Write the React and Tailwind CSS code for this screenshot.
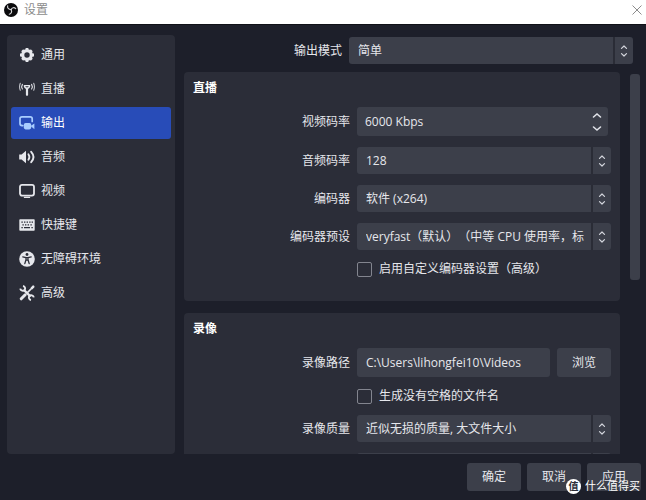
import { useState } from 'react';

function ObsLogo() {
  return (
    <svg viewBox="0 0 16 16" className="size-3.5" fill="none" strokeLinecap="round">
      <circle cx="8" cy="8" r="8" fill="#0b0b0d" />
      <g stroke="#d8d8da" strokeWidth="1.3">
        <path d="M4.2 3.2c-.6 2.4 1 4.2 3.8 4.2" />
        <path d="M8 7.6c1.2-2.4 3.6-3 5.4-1.2" />
        <path d="M8.2 7.6c1.2 2.2.2 4.6-2.2 5.2" />
      </g>
    </svg>
  );
}

function GearIcon() {
  return (
    <svg viewBox="0 0 16 16" className="size-4" fill="none" stroke="currentColor">
      <circle cx="8" cy="8" r="4.3" strokeWidth="3.2" />
      <path
        d="M8 1v2M8 13v2M1 8h2M13 8h2M3.2 3.2l1.2 1.2M11.6 11.6l1.2 1.2M3.2 12.8l1.2-1.2M11.6 4.4l1.2-1.2"
        strokeWidth="2.8"
      />
    </svg>
  );
}

function AntennaIcon() {
  return (
    <svg
      viewBox="0 0 16 16"
      className="size-4"
      fill="none"
      stroke="currentColor"
      strokeLinecap="round"
    >
      <path d="M5.4 4.6Q5.6 7 8 7.4q2.4-.4 2.6-2.8z" strokeWidth="1.4" strokeLinejoin="round" />
      <path d="M8 7.6v6.2" strokeWidth="2.2" />
      <path d="M3.4 3.4q-1.4 2.3 0 4.6M12.6 3.4q1.4 2.3 0 4.6" strokeWidth="1.1" />
      <path d="M1.3 2.2q-1.5 3.5 0 7M14.7 2.2q1.5 3.5 0 7" strokeWidth="1.1" opacity=".8" />
    </svg>
  );
}

function OutputIcon() {
  return (
    <svg viewBox="0 0 16 16" className="size-4 text-[#a9ceff]" fill="none">
      <path
        d="M3.8 10.6H3a2 2 0 0 1-2-2V3.8a2 2 0 0 1 2-2h8.2a2 2 0 0 1 2 2v2.6"
        stroke="currentColor"
        strokeWidth="1.7"
        strokeLinecap="round"
      />
      <rect x="4.8" y="8" width="7.4" height="6.4" rx="1.8" fill="currentColor" />
      <path d="M11.6 11l3.8-2.6v5.8z" fill="currentColor" />
    </svg>
  );
}

function SpeakerIcon() {
  return (
    <svg viewBox="0 0 16 16" className="size-4" fill="none" stroke="currentColor">
      <path d="M.2 5.4h2.4L7 1.8v12.4l-4.4-3.6H.2z" fill="currentColor" stroke="none" />
      <path d="M9.4 5.2q2 2.8 0 5.6" strokeWidth="1.8" strokeLinecap="round" />
      <path d="M12.2 2.8q4.6 5.2 0 10.4" strokeWidth="1.9" strokeLinecap="round" />
    </svg>
  );
}

function MonitorIcon() {
  return (
    <svg viewBox="0 0 16 16" className="size-4" fill="none" stroke="currentColor">
      <rect x="1" y="1.8" width="14" height="10.8" rx="2" strokeWidth="1.8" />
      <path d="M5.4 14.4h5.2" strokeWidth="1.2" strokeLinecap="round" />
    </svg>
  );
}

function KeyboardIcon() {
  return (
    <svg viewBox="0 0 16 16" className="size-4">
      <rect x=".3" y="2.2" width="15.4" height="11.6" rx=".8" fill="currentColor" />
      <path
        d="M2.4 5.2h1.4M5 5.2h1.4M7.6 5.2H9M10.2 5.2h1.4M12.6 5.2H14M3.4 7.8h1.4M6 7.8h1.4M8.6 7.8H10M11.4 7.8h1.4M2.4 10.6h1.4M5 10.6h6M12.4 10.6h1.4"
        stroke="#2b2d38"
        strokeWidth="1.2"
      />
    </svg>
  );
}

function AccessIcon() {
  return (
    <svg viewBox="0 0 16 16" className="size-4">
      <circle cx="8" cy="8" r="7.8" fill="currentColor" />
      <circle cx="8" cy="3.5" r="1.4" fill="#2b2d38" />
      <path
        d="M3.8 5.8L7 6.6v2.2L5.8 12.6M12.2 5.8L9 6.6v2.2l1.2 3.8M7 6.6h2v2.6H7z"
        fill="none"
        stroke="#2b2d38"
        strokeWidth="1.3"
        strokeLinecap="round"
        strokeLinejoin="round"
      />
    </svg>
  );
}

function ToolsIcon() {
  return (
    <svg viewBox="0 0 16 16" className="size-4" fill="none" stroke="currentColor">
      {/* wrench */}
      <path d="M4.6 4.6l7 7" strokeWidth="2.2" />
      <path d="M1.2 3.6a2.6 2.6 0 0 0 4.6 1.2A2.6 2.6 0 0 0 4 1" strokeWidth="1.9" />
      <path d="M14.8 12.4a2.6 2.6 0 0 0-4.6-1.2 2.6 2.6 0 0 0 1.8 3.8" strokeWidth="1.9" />
      {/* screwdriver */}
      <path d="M14.6 1.4L8.4 7.6" strokeWidth="1.5" strokeLinecap="round" />
      <path d="M12.4 3.6l2.4-2.4" strokeWidth="2.4" />
      <path d="M6.2 9.8l-4 4" strokeWidth="3" strokeLinecap="round" />
    </svg>
  );
}

function UpDown({ className }) {
  return (
    <svg
      viewBox="0 0 8 14"
      className={className}
      fill="none"
      stroke="#d4d6dd"
      strokeWidth="1.2"
      strokeLinecap="round"
      strokeLinejoin="round"
    >
      <path d="M1.5 4.4L4 2l2.5 2.4M1.5 9.6L4 12l2.5-2.4" />
    </svg>
  );
}

function Select({ id, options }) {
  return (
    <div className="relative min-w-0 flex-1">
      <select
        id={id}
        className="block h-[27px] w-full appearance-none rounded-[3px] bg-[#3c3f4a] pr-6 pl-[9px] text-[#e6e7ec]"
      >
        {options.map((option) => (
          <option key={option}>{option}</option>
        ))}
      </select>
      <div className="pointer-events-none absolute inset-y-0 right-0 flex w-5 items-center justify-center border-l-2 border-[#2a2c36]">
        <UpDown className="h-3.5 w-2" />
      </div>
    </div>
  );
}

function Row({ label, id, children }) {
  return (
    <div className="flex items-center gap-[7px]">
      <label htmlFor={id} className="w-[157px] shrink-0 text-right">
        {label}
      </label>
      {children}
    </div>
  );
}

function Check({ label }) {
  return (
    <label className="ml-[164px] flex items-center gap-[7px] self-start">
      <input
        type="checkbox"
        className="size-[15px] appearance-none rounded-[2px] border border-[#83858f] checked:bg-[#284cb8]"
      />
      {label}
    </label>
  );
}

function Group({ title, children }) {
  return (
    <section className="rounded-[4px] bg-[#2b2d38] px-[9px]">
      <h2 className="pt-2 leading-4 font-bold text-white">{title}</h2>
      <div className="flex flex-col gap-[11px] pt-[11px] pb-6">{children}</div>
    </section>
  );
}

const tabs = [
  { name: '通用', icon: <GearIcon /> },
  { name: '直播', icon: <AntennaIcon /> },
  { name: '输出', icon: <OutputIcon /> },
  { name: '音频', icon: <SpeakerIcon /> },
  { name: '视频', icon: <MonitorIcon /> },
  { name: '快捷键', icon: <KeyboardIcon /> },
  { name: '无障碍环境', icon: <AccessIcon /> },
  { name: '高级', icon: <ToolsIcon /> },
];

export default function App() {
  const [active, setActive] = useState('输出');
  const [bitrate, setBitrate] = useState('6000 Kbps');
  const [path, setPath] = useState('C:\\Users\\lihongfei10\\Videos');

  return (
    <div className="flex h-screen flex-col overflow-hidden bg-[#1d1f2a] font-['Open_Sans','Noto_Sans_CJK_SC',sans-serif] text-[12px] leading-4 text-[#e6e7ec] [text-spacing-trim:space-all]">
      {/* Title bar */}
      <header className="flex h-[25px] shrink-0 items-center justify-between border-b border-[#101218] bg-white pr-1 pb-1 pl-1">
        <div className="flex items-center gap-1.5 text-[#8c8c8c]">
          <ObsLogo />
          <h1>设置</h1>
        </div>
        <button aria-label="关闭" className="text-[#8c8c8c]">
          <svg viewBox="0 0 10 10" className="size-2.5" stroke="currentColor">
            <path d="M.5.5l9 9M9.5.5l-9 9" />
          </svg>
        </button>
      </header>

      <main className="flex min-h-0 flex-1 gap-[9px] pt-2.5 pl-[7px]">
        {/* Sidebar */}
        <nav className="flex w-[168px] shrink-0 flex-col gap-0.5 rounded-[4px] bg-[#2b2d38] p-1">
          {tabs.map((tab) => (
            <button
              key={tab.name}
              onClick={() => setActive(tab.name)}
              className={
                tab.name === active
                  ? 'flex h-8 items-center gap-1.5 rounded-[3px] bg-[#284cb8] px-2 text-white'
                  : 'flex h-8 items-center gap-1.5 rounded-[3px] px-2'
              }
            >
              {tab.icon}
              {tab.name}
            </button>
          ))}
        </nav>

        <div className="flex min-w-0 flex-1 flex-col gap-2 pt-0.5">
          <div className="flex items-center gap-[7px] pr-[13px]">
            <label htmlFor="mode" className="w-[158px] shrink-0 text-right">
              输出模式
            </label>
            <Select id="mode" options={['简单', '高级']} />
          </div>

          {/* Scroll area */}
          <div className="flex min-h-0 flex-1 gap-2.5 pr-1.5">
            <div className="flex min-w-0 flex-1 flex-col gap-3 overflow-hidden">
              <Group title="直播">
                <Row label="视频码率" id="bitrate">
                  <div className="relative mr-[3px] min-w-0 flex-1">
                    <input
                      id="bitrate"
                      value={bitrate}
                      onChange={(e) => setBitrate(e.target.value)}
                      className="block h-[29px] w-full rounded-[3px] bg-[#3c3f4a] px-2 text-[#e6e7ec]"
                    />
                    <div className="pointer-events-none absolute inset-y-0 right-1 flex w-3.5 items-center justify-center">
                      <svg
                        viewBox="0 0 10 20"
                        className="h-5 w-2.5"
                        fill="none"
                        stroke="#e0e2e8"
                        strokeWidth="1.6"
                        strokeLinecap="round"
                      >
                        <path d="M1.5 5L5 2l3.5 3M1.5 15L5 18l3.5-3" />
                      </svg>
                    </div>
                  </div>
                </Row>
                <Row label="音频码率" id="audio">
                  <Select id="audio" options={['128', '160', '192', '320']} />
                </Row>
                <Row label="编码器" id="encoder">
                  <Select id="encoder" options={['软件 (x264)']} />
                </Row>
                <Row label="编码器预设" id="preset">
                  <Select id="preset" options={['veryfast（默认）（中等 CPU 使用率，标']} />
                </Row>
                <Check label="启用自定义编码器设置（高级）" />
              </Group>

              <Group title="录像">
                <Row label="录像路径" id="path">
                  <input
                    id="path"
                    value={path}
                    onChange={(e) => setPath(e.target.value)}
                    className="h-[29px] min-w-0 flex-1 rounded-[3px] bg-[#3c3f4a] px-[9px] text-[#e6e7ec]"
                  />
                  <button className="h-[29px] w-[54px] rounded-[3px] bg-[#3c3f4a]">浏览</button>
                </Row>
                <Check label="生成没有空格的文件名" />
                <Row label="录像质量" id="quality">
                  <Select id="quality" options={['近似无损的质量, 大文件大小']} />
                </Row>
                <Row label="" id="format">
                  <Select id="format" options={[]} />
                </Row>
              </Group>
            </div>
            <div className="mt-0.5 h-[54%] w-2.5 shrink-0 rounded-[3px] bg-[#3c3f4a]" />
          </div>
        </div>
      </main>

      <footer className="relative flex h-[46px] shrink-0 justify-end gap-1.5 pt-[9px] pr-[5px]">
        <button className="h-7 w-[54px] rounded-[3px] bg-[#3c3f4a]">确定</button>
        <button className="h-7 w-[54px] rounded-[3px] bg-[#3c3f4a]">取消</button>
        <button className="h-7 w-[54px] rounded-[3px] bg-[#3c3f4a]">应用</button>
        {/* Site mark over the buttons */}
        <div className="pointer-events-none absolute right-1.5 bottom-1.5 flex items-center gap-1 text-[11px] text-white">
          <span className="flex size-[15px] items-center justify-center rounded-full bg-white text-[10px] font-bold text-[#2b2d38]">
            值
          </span>
          什么值得买
        </div>
      </footer>
    </div>
  );
}
